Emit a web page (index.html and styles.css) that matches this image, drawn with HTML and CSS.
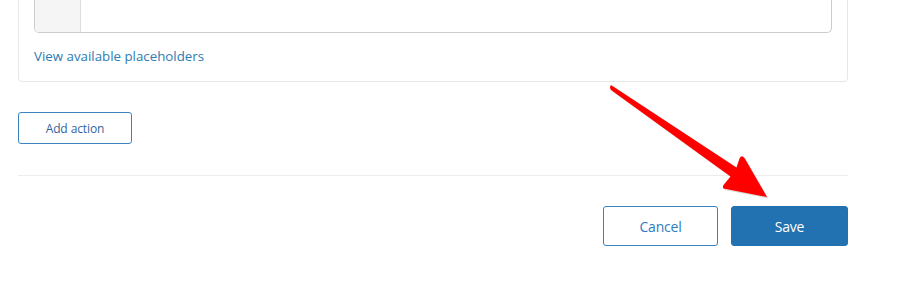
FILE: index.html
```html
<!DOCTYPE html>
<html>
<head>
<meta charset="utf-8">
<link rel="stylesheet" href="styles.css">
</head>
<body>
<div class="page">
  <div class="card">
    <div class="editor">
      <div class="gutter"></div>
      <div class="code"></div>
    </div>
    <a class="link" href="#">View available placeholders</a>
  </div>
  <div class="actions-row">
    <button class="btn-outline small">Add action</button>
  </div>
  <hr class="divider">
  <div class="footer">
    <button class="btn-outline big cancel">Cancel</button>
    <button class="btn-primary big">Save</button>
  </div>
  <svg class="arrow" width="921" height="286" viewBox="0 0 921 286">
    <path d="M611,105 Q609,107.5 611,110 L730.5,196.5 L723.5,205 Q721.5,209.5 726,209 L767,217 L744.5,178 Q741.5,174.5 739.5,178.5 L736.5,187.5 Z" fill="#b3b3b3" opacity="0.5" transform="translate(1.5,1.5)"/>
    <path d="M611,105 Q609,107.5 611,110 L730.5,196.5 L723.5,205 Q721.5,209.5 726,209 L767,217 L744.5,178 Q741.5,174.5 739.5,178.5 L736.5,187.5 Z" fill="#ff0000"/>
  </svg>
</div>
</body>
</html>
```
FILE: styles.css
```css
* { box-sizing: border-box; }
html, body {
  margin: 0;
  padding: 0;
  background: #ffffff;
  font-family: "Open Sans", "Noto Sans", sans-serif;
  overflow: hidden;
}
.page {
  position: relative;
  width: 921px;
  height: 286px;
  padding-left: 18px;
}
.card {
  width: 830px;
  margin-top: -20px;
  border: 1px solid #e6e6e6;
  border-radius: 4px;
  padding: 0 15px 16px 15px;
  display: flex;
  flex-direction: column;
}
.editor {
  height: 52px;
  border: 1px solid #cccccc;
  border-top: none;
  border-radius: 0 0 5px 5px;
  display: flex;
  overflow: hidden;
}
.gutter {
  width: 46px;
  background: #f5f5f5;
  border-right: 1px solid #dddddd;
}
.code { flex: 1; }
.link {
  margin-top: 14px;
  font-size: 13.3px;
  line-height: 18px;
  color: #2d7cb3;
  text-decoration: none;
}
.actions-row {
  margin-top: 30px;
  display: flex;
}
button {
  font-family: "Open Sans", "Noto Sans", sans-serif;
  cursor: pointer;
}
.btn-outline {
  background: #ffffff;
  border: 1px solid #3a83c0;
  border-radius: 3px;
  color: #3464a0;
}
.small {
  width: 114px;
  height: 32px;
  font-size: 12px;
  letter-spacing: -0.1px;
  padding: 0;
}
.divider {
  width: 830px;
  margin: 31px 0 0 0;
  border: none;
  border-top: 1px solid #ececec;
  height: 0;
}
.footer {
  width: 830px;
  margin-top: 30px;
  display: flex;
  justify-content: flex-end;
  gap: 13px;
}
.big {
  width: 116px;
  height: 40px;
  font-size: 14px;
  padding: 0;
}
.btn-outline.cancel { width: 115px; color: #2f7cc0; letter-spacing: -0.2px; }
.btn-primary {
  background: #2271b1;
  border: 1px solid #2271b1;
  border-radius: 3px;
  color: #ffffff;
  width: 117px;
  letter-spacing: -0.2px;
}
.arrow {
  position: absolute;
  left: 0;
  top: 0;
  pointer-events: none;
}
```
